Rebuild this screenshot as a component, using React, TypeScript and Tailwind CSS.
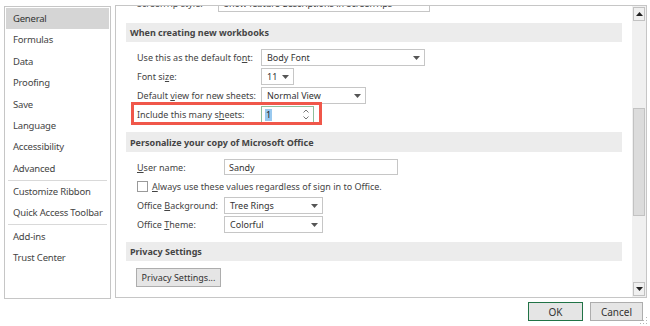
import React from 'react';

const menu = [
  ['General', 'Formulas', 'Data', 'Proofing', 'Save', 'Language', 'Accessibility', 'Advanced'],
  ['Customize Ribbon', 'Quick Access Toolbar'],
  ['Add-ins', 'Trust Center'],
];

function Caret() {
  return (
    <svg width="7" height="4" viewBox="0 0 7 4" className="shrink-0">
      <path d="M0 0h7L3.5 4z" fill="#555" />
    </svg>
  );
}

function Select({ value, width }: { value: string; width: string }) {
  return (
    <div
      className={`${width} h-[17px] border border-[#c6c6c6] bg-white flex items-center justify-between pl-[5px] pr-[4px] text-[#333]`}
    >
      <span>{value}</span>
      <Caret />
    </div>
  );
}

function Band({ title }: { title: string }) {
  return (
    <div className="h-[19px] bg-[#ececec] flex items-center pl-[4px] font-bold text-[#444]">
      {title}
    </div>
  );
}

function Label({ children, width }: { children: React.ReactNode; width: string }) {
  return <div className={`${width} shrink-0 text-[#444] whitespace-nowrap`}>{children}</div>;
}

export default function App() {
  return (
    <div className="w-[650px] h-[326px] bg-white font-['Noto_Sans',sans-serif] text-[9px] leading-none overflow-hidden relative">
      <div className="flex pt-[5px] pl-[4px] gap-[4px]">
        {/* Left menu */}
        <div className="w-[107px] h-[293px] mt-px border border-[#c6c6c6] p-px text-[9.5px] tracking-[-0.2px] text-[#444]">
          {menu.map((group, gi) => (
            <div key={gi}>
              {gi > 0 && (
                <div className="h-[2px] flex items-center px-[2px]">
                  <div className="h-px w-full bg-[#d9d9d9]" />
                </div>
              )}
              {group.map((item) => (
                <div
                  key={item}
                  className={`h-[21.4px] flex items-center pl-[7px] whitespace-nowrap ${
                    item === 'General' ? 'bg-[#d5d5d5] text-[#333]' : ''
                  }`}
                >
                  {item}
                </div>
              ))}
            </div>
          ))}
        </div>

        {/* Options panel */}
        <div className="w-[532px] h-[293px] border border-[#c6c6c6] flex overflow-hidden">
          <div className="flex-1 overflow-hidden pl-[10px] pr-[10px]">
            {/* row scrolled partly out of view */}
            <div className="-mt-[11px] h-[17px] flex items-center pl-[11px]">
              <Label width="w-[81px]">ScreenTip style:</Label>
              <div className="w-[212px] h-[17px] border border-[#c6c6c6] flex items-center pl-[5px] text-[#333] whitespace-nowrap">
                Show feature descriptions in ScreenTips
              </div>
            </div>

            <div className="mt-[11px]">
              <Band title="When creating new workbooks" />
            </div>

            <div className="pl-[11px]">
              <div className="mt-[7px] h-[17px] flex items-center">
                <Label width="w-[124px]">
                  Use this as the default fo<u>n</u>t:
                </Label>
                <Select value="Body Font" width="w-[164px]" />
              </div>
              <div className="mt-[2px] h-[17px] flex items-center">
                <Label width="w-[124px]">
                  Font si<u>z</u>e:
                </Label>
                <Select value="11" width="w-[33px]" />
              </div>
              <div className="mt-[2px] h-[17px] flex items-center">
                <Label width="w-[124px]">
                  Default <u>v</u>iew for new sheets:
                </Label>
                <Select value="Normal View" width="w-[105px]" />
              </div>
              <div className="mt-[2px] h-[17px] flex items-center relative">
                <Label width="w-[124px]">
                  Include this many s<u>h</u>eets:
                </Label>
                <div className="w-[53px] h-[17px] border border-[#8fbf9c] bg-white flex items-center justify-between pl-[3px] pr-[4px]">
                  <span className="bg-[#99c9ef] text-[#222] px-px h-[12px] flex items-center">1</span>
                  <svg width="6" height="11" viewBox="0 0 6 11">
                    <path d="M0.5 3.5L3 1l2.5 2.5M0.5 7.5L3 10l2.5-2.5" fill="none" stroke="#666" strokeWidth="0.9" />
                  </svg>
                </div>
                <div className="absolute -left-[6px] -top-[4px] w-[191px] h-[23px] border-[3px] border-[#f0574a]" />
              </div>
            </div>

            <div className="mt-[9px]">
              <div className="h-[20px] bg-[#ececec] flex items-center pl-[4px] font-bold text-[#444]">
                Personalize your copy of Microsoft Office
              </div>
            </div>

            <div className="pl-[11px]">
              <div className="mt-[7px] h-[16px] flex items-center">
                <Label width="w-[87px]">
                  <u>U</u>ser name:
                </Label>
                <div className="w-[174px] h-[16px] border border-[#c6c6c6] flex items-center pl-[4px] text-[#333]">
                  Sandy
                </div>
              </div>
              <div className="mt-[4px] h-[15px] flex items-center">
                <div className="w-[11px] h-[11px] border border-[#9a9a9a] bg-white mr-[4px]" />
                <span className="text-[#444]">
                  <u>A</u>lways use these values regardless of sign in to Office.
                </span>
              </div>
              <div className="mt-[3px] h-[17px] flex items-center">
                <Label width="w-[87px]">
                  Office <u>B</u>ackground:
                </Label>
                <Select value="Tree Rings" width="w-[99px]" />
              </div>
              <div className="mt-[2px] h-[17px] flex items-center">
                <Label width="w-[87px]">
                  Office <u>T</u>heme:
                </Label>
                <Select value="Colorful" width="w-[99px]" />
              </div>
            </div>

            <div className="mt-[9px]">
              <Band title="Privacy Settings" />
            </div>

            <div className="pl-[10px] mt-[7px]">
              <button className="w-[85px] h-[19px] border border-[#adadad] bg-[#e5e5e5] text-[#333] flex items-center justify-center">
                Privacy Settings...
              </button>
            </div>
          </div>

          {/* Scrollbar */}
          <div className="w-[14px] bg-[#f0f0f0] flex flex-col justify-between py-px">
            <div className="h-[14px] mx-px border border-[#c2c2c2] bg-[#f0f0f0] flex items-center justify-center">
              <svg width="7" height="4" viewBox="0 0 7 4">
                <path d="M0 4h7L3.5 0z" fill="#222" />
              </svg>
            </div>
            <div className="flex-1 flex flex-col pt-[87px] pb-[66px]">
              <div className="flex-1 mx-px border border-[#c2c2c2] bg-[#dcdcdc]" />
            </div>
            <div className="h-[14px] mx-px border border-[#c2c2c2] bg-[#f0f0f0] flex items-center justify-center">
              <svg width="7" height="4" viewBox="0 0 7 4">
                <path d="M0 0h7L3.5 4z" fill="#222" />
              </svg>
            </div>
          </div>
        </div>
      </div>

      {/* Footer buttons */}
      <div className="flex justify-end gap-[7px] pr-[7px] mt-[3px] text-[10px] text-[#333]">
        <button className="w-[55px] h-[19px] border border-[#217346] bg-[#e5e5e5] flex items-center justify-center">
          OK
        </button>
        <button className="w-[53px] h-[19px] border border-[#adadad] bg-[#e5e5e5] flex items-center justify-center">
          Cancel
        </button>
      </div>

      {/* Resize grip */}
      <svg width="8" height="8" viewBox="0 0 8 8" className="absolute right-[2px] bottom-[1px]">
        <g fill="#b5b5b5">
          <rect x="6" y="0" width="1" height="1" />
          <rect x="6" y="3" width="1" height="1" />
          <rect x="3" y="3" width="1" height="1" />
          <rect x="6" y="6" width="1" height="1" />
          <rect x="3" y="6" width="1" height="1" />
          <rect x="0" y="6" width="1" height="1" />
        </g>
      </svg>
    </div>
  );
}
